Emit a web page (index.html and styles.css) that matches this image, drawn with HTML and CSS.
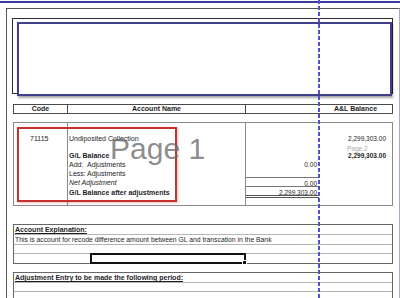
FILE: index.html
```html
<!DOCTYPE html>
<html>
<head>
<meta charset="utf-8">
<link rel="stylesheet" href="styles.css">
</head>
<body>
<div class="topbar"></div>
<div class="page">
  <div class="hdr-outer"><div class="hdr-inner"></div></div>

  <div class="cols colhead">
    <div class="c1">Code</div>
    <div class="c2">Account Name</div>
    <div class="c3"></div>
    <div class="c4">A&amp;L Balance</div>
  </div>

  <div class="cols tbody">
    <div class="c1 col">
      <div class="ln h10 code">71115</div>
    </div>
    <div class="c2 col">
      <div class="ln h10">Undiposited Collection</div>
      <div class="h7"></div>
      <div class="ln h10 b">G/L Balance</div>
      <div class="ln h9"><span class="lbl">Add:</span><span>Adjustments</span></div>
      <div class="ln h9"><span class="lbl">Less:</span><span>Adjustments</span></div>
      <div class="ln h9 i">Net Adjustment</div>
      <div class="ln h10 b">G/L Balance after adjustments</div>
    </div>
    <div class="c3 col">
      <div class="h27"></div>
      <div class="ln h9 num">0.00</div>
      <div class="h8"></div>
      <div class="ln h9 num ruled">0.00</div>
      <div class="ln num ruled total">2,299,303.00</div>
    </div>
    <div class="c4 col">
      <div class="ln h10 num">2,299,303.00</div>
      <div class="h7"></div>
      <div class="ln h10 num b">2,299,303.00</div>
    </div>
    <div class="redbox"></div>
    <div class="wm1">Page 1</div>
    <div class="wm2">Page 2</div>
  </div>

  <div class="box expl">
    <div class="row"><span class="b u">Account Explanation:</span></div>
    <div class="row note">This is account for recode difference amount between GL and transcation in the Bank</div>
    <div class="row r9"></div>
    <div class="row r9 last"></div>
    <div class="selcell"></div>
  </div>

  <div class="box adj">
    <div class="row"><span class="b u">Adjustment Entry to be made the following period:</span></div>
    <div class="row r9"></div>
    <div class="row r9"></div>
  </div>
</div>
<div class="pagebreak"></div>
</body>
</html>
```

FILE: styles.css
```css
html, body {
  margin: 0;
  padding: 0;
}
body {
  font-family: "Liberation Sans", Arial, sans-serif;
  font-size: 7px;
  color: #1e1e1e;
  background: #fff;
  position: relative;
  width: 400px;
  height: 298px;
  overflow: hidden;
}
.topbar {
  height: 2px;
  margin-top: 1px;
  background: #3b3b9e;
}
.page {
  margin: 5px 0 0 6px;
  width: 394px;
  height: 290px;
  box-sizing: border-box;
  border-left: 1px solid #555;
  border-top: 1px solid #555;
  border-right: 1px solid #aaa4d8;
  padding-top: 9px;
  overflow: hidden;
}
.hdr-outer {
  margin-left: 5px;
  width: 381px;
  height: 76px;
  box-sizing: border-box;
  border: 1px solid #2b2b2b;
  padding: 3px 0 0 4px;
}
.hdr-inner {
  height: 74px;
  box-sizing: border-box;
  border: 2px solid #3f3f8e;
  background: #fff;
  box-shadow: 1px 2px 2px rgba(0, 0, 0, 0.35);
}
.cols {
  margin-left: 6px;
  width: 380px;
  box-sizing: border-box;
  display: grid;
  grid-template-columns: 54px 178px 73px 73px;
}
.colhead {
  margin-top: 10px;
  height: 10px;
  border: 1px solid #4a4a4a;
  font-weight: bold;
  text-align: center;
  line-height: 8px;
}
.colhead .c1, .colhead .c2 {
  border-right: 1px solid #4a4a4a;
}
.tbody {
  margin-top: 8px;
  height: 84px;
  border: 1px solid #8a8a8a;
  position: relative;
}
.tbody .col {
  display: flex;
  flex-direction: column;
  padding-top: 10px;
  min-width: 0;
}
.tbody .c1, .tbody .c2 {
  border-right: 1px solid #8a8a8a;
}
.ln {
  display: flex;
  align-items: center;
  white-space: nowrap;
  box-sizing: border-box;
}
.h10 { height: 10px; }
.h9 { height: 9px; }
.h8 { height: 8px; }
.h7 { height: 7px; }
.h27 { height: 27px; }
.code { padding-left: 16px; }
.c2 .ln { padding-left: 1px; }
.lbl {
  flex: 0 0 18px;
}
.b { font-weight: bold; }
.i { font-style: italic; }
.u { text-decoration: underline; }
.num {
  justify-content: flex-end;
  font-size: 6.5px;
}
.c3 .num { padding-right: 2px; }
.c4 .num { padding-right: 6px; }
.ruled {
  border-top: 1px solid #777;
  padding-top: 2px;
}
.total {
  height: 12px;
  border-bottom: 3px double #555;
}
.redbox {
  position: absolute;
  left: 3px;
  top: 4px;
  width: 160px;
  height: 75px;
  box-sizing: border-box;
  border: 2px solid #c8302e;
  box-shadow: 1px 1px 2px rgba(200, 60, 60, 0.35);
}
.wm1 {
  position: absolute;
  left: 96px;
  top: 11px;
  font-size: 30px;
  line-height: 30px;
  color: rgba(110, 110, 110, 0.8);
  white-space: nowrap;
}
.wm2 {
  position: absolute;
  left: 333px;
  top: 22px;
  font-size: 6.5px;
  line-height: 7px;
  color: #a8a8a8;
  white-space: nowrap;
}
.box {
  margin-left: 6px;
  width: 380px;
  box-sizing: border-box;
  border: 1px solid #666;
  position: relative;
}
.expl { margin-top: 18px; }
.adj { margin-top: 8px; }
.row {
  height: 10px;
  box-sizing: border-box;
  border-bottom: 1px solid #b5b5b5;
  padding-left: 1px;
  display: flex;
  align-items: center;
  white-space: nowrap;
}
.row.note { font-size: 6.8px; }
.row.r9 { height: 9px; }
.row.last {
  border-bottom: none;
}
.selcell {
  position: absolute;
  left: 76px;
  top: 28px;
  width: 156px;
  height: 11px;
  box-sizing: border-box;
  border: 2px solid #111;
}
.selcell::after {
  content: "";
  position: absolute;
  right: -3px;
  bottom: -3px;
  width: 3px;
  height: 3px;
  background: #111;
  border: 1px solid #fff;
}
.pagebreak {
  position: absolute;
  left: 318px;
  top: 0;
  width: 2px;
  height: 298px;
  background: repeating-linear-gradient(to bottom, #5151cf 0, #5151cf 4px, transparent 4px, transparent 6px);
}
```
